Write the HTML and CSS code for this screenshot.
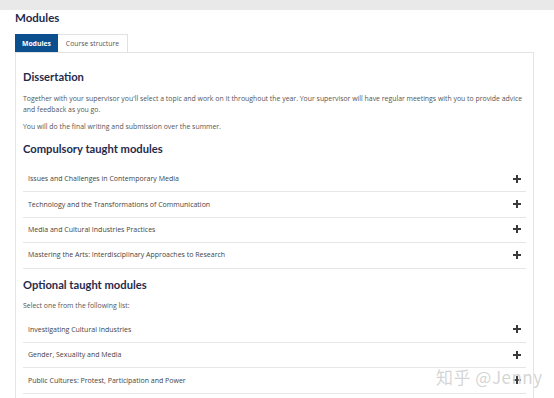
FILE: index.html
```html
<!DOCTYPE html>
<html lang="en">
<head>
    <meta charset="UTF-8">
    <meta name="viewport" content="width=device-width, initial-scale=1.0">
    <title>Modules</title>
    <link rel="stylesheet" href="styles.css">
</head>
<body>
    <div class="topbar"></div>
    <div class="page">
        <h1 class="page-title">Modules</h1>

        <div class="tabs">
            <div class="tab active">Modules</div>
            <div class="tab">Course structure</div>
        </div>

        <div class="panel">
            <h2>Dissertation</h2>
            <p>Together with your supervisor you'll select a topic and work on it throughout the year. Your supervisor will have regular meetings with you to provide advice and feedback as you go.</p>
            <p class="gap">You will do the final writing and submission over the summer.</p>

            <h2 class="section">Compulsory taught modules</h2>
            <ul class="module-list">
                <li>Issues and Challenges in Contemporary Media <span class="plus"></span></li>
                <li>Technology and the Transformations of Communication <span class="plus"></span></li>
                <li>Media and Cultural Industries Practices <span class="plus"></span></li>
                <li>Mastering the Arts: Interdisciplinary Approaches to Research <span class="plus"></span></li>
            </ul>

            <h2 class="section optional">Optional taught modules</h2>
            <p class="select">Select one from the following list:</p>
            <ul class="module-list short">
                <li>Investigating Cultural Industries <span class="plus"></span></li>
                <li>Gender, Sexuality and Media <span class="plus"></span></li>
                <li>Public Cultures: Protest, Participation and Power <span class="plus"></span></li>
            </ul>
        </div>
    </div>

    <div class="watermark">知乎 @Jenny</div>
</body>
</html>
```

FILE: styles.css
```css
/* Global */
* {
    box-sizing: border-box;
    margin: 0;
    padding: 0;
}

body {
    font-family: "Open Sans", Lato, sans-serif;
    background-color: #fff;
    color: #555;
    height: 398px;
    overflow: hidden;
    position: relative;
}

.topbar {
    height: 10px;
    background-color: #e9e9e9;
}

.page {
    padding: 0 20px 0 15px;
}

.page-title {
    font-family: Lato, sans-serif;
    font-size: 11.5px;
    font-weight: bold;
    line-height: 14px;
    color: #1f2b4d;
    margin: 1px 0 9px;
}

/* Tabs */
.tabs {
    display: flex;
    height: 18px;
}

.tab {
    display: flex;
    align-items: center;
    padding: 0 8px;
    font-size: 6.8px;
    color: #555;
    border: 1px solid #e1e1e1;
    border-bottom: none;
    border-left: none;
}

.tab.active {
    background-color: #0c4f8e;
    color: #fff;
    font-weight: bold;
    padding: 0 7px;
    border: none;
}

/* Panel */
.panel {
    border: 1px solid #e4e4e4;
    border-bottom: none;
    padding: 17px 7px 0;
    height: 360px;
}

h2 {
    font-family: Lato, sans-serif;
    font-size: 11.2px;
    font-weight: bold;
    line-height: 14px;
    color: #1f2b4d;
    margin-bottom: 9px;
}

p {
    font-size: 6.9px;
    line-height: 11px;
}

p.gap {
    margin-top: 6px;
}

h2.section {
    margin-top: 10px;
    margin-bottom: 11px;
}

h2.optional {
    margin-top: 9px;
    margin-bottom: 8px;
}

p.select {
    margin-bottom: 7px;
}

/* Module rows */
.module-list {
    list-style: none;
}

.module-list li {
    display: flex;
    align-items: center;
    justify-content: space-between;
    height: 25.4px;
    padding: 0 5px 1px 5px;
    border-bottom: 1px solid #e6e6e6;
    font-size: 7px;
    color: #444;
}

.plus {
    position: relative;
    width: 8px;
    height: 8px;
}

.plus::before,
.plus::after {
    content: "";
    position: absolute;
    background-color: #3a3a3a;
}

.plus::before {
    left: 0;
    top: 3px;
    width: 8px;
    height: 2px;
}

.plus::after {
    left: 3px;
    top: 0;
    width: 2px;
    height: 8px;
}

/* Watermark */
.watermark {
    position: absolute;
    left: 436px;
    top: 364px;
    font-family: "Noto Sans CJK SC", sans-serif;
    font-size: 17px;
    color: rgba(170, 170, 170, 0.5);
    text-shadow: 0 0 1px #fff;
    letter-spacing: 0.5px;
}
```
